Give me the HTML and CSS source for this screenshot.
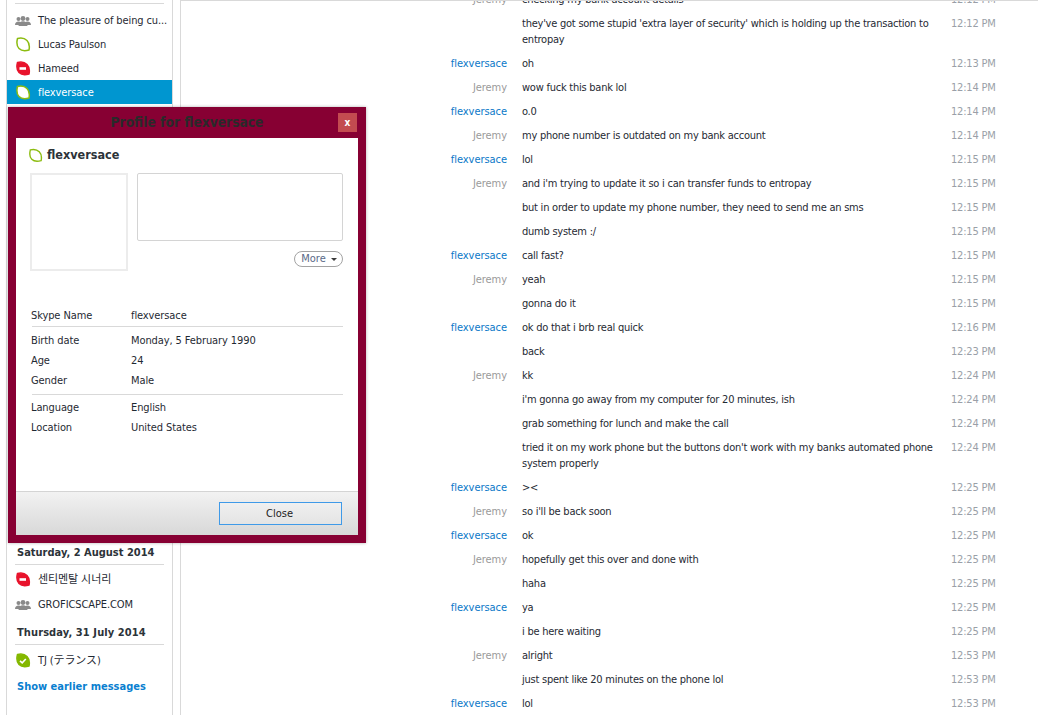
FILE: index.html
```html
<!DOCTYPE html>
<html lang="en">
<head>
<meta charset="utf-8">
<title>Skype</title>
<link rel="stylesheet" href="styles.css">
</head>
<body>
<svg class="defs" width="0" height="0" aria-hidden="true">
  <defs>
    <path id="blob" d="M2.500 1.500C6 .6 10 1.500 12 3.500 14 5.500 14.800 9 14 13 10.500 14 6 13.500 4 11.500 2 9.500 1.500 5.500 2.500 1.500Z"/>
    <g id="people" fill="#8a8a8a">
      <circle cx="3.500" cy="5" r="2"/><circle cx="12.500" cy="5" r="2"/><circle cx="8" cy="4.500" r="2.400"/>
      <path d="M0 11c0-2.400 1.400-3.600 3.500-3.600S7 8.600 7 11ZM9 11c0-2.400 1.400-3.600 3.500-3.600S16 8.600 16 11Z"/>
      <path d="M3.500 12c0-3 2-4.800 4.500-4.800s4.500 1.800 4.500 4.800Z"/>
    </g>
  </defs>
</svg>

<aside class="sidebar">
  <div class="side-top">
    <div class="side-rule"></div>
    <div class="contact"><svg class="ico ico-people" viewBox="0 0 16 12"><use href="#people"/></svg><span class="cname">The pleasure of being cu...</span></div>
    <div class="contact"><svg class="ico" viewBox="0 0 16 15"><use href="#blob" fill="#fff" stroke="#8cbc10" stroke-width="1.500"/></svg><span class="cname">Lucas Paulson</span></div>
    <div class="contact"><svg class="ico" viewBox="0 0 16 15"><use href="#blob" fill="#e8132c" stroke="#e8132c" stroke-width="1.500"/><rect x="4.500" y="6.200" width="6.500" height="2.600" fill="#fff"/></svg><span class="cname">Hameed</span></div>
    <div class="contact selected"><svg class="ico" viewBox="0 0 16 15"><use href="#blob" fill="#fff" stroke="#8cbc10" stroke-width="1.500"/></svg><span class="cname">flexversace</span></div>
  </div>
  <div class="side-bottom">
    <div class="day">Saturday, 2 August 2014</div>
    <div class="contact"><svg class="ico" viewBox="0 0 16 15"><use href="#blob" fill="#e8132c" stroke="#e8132c" stroke-width="1.500"/><rect x="4.500" y="6.200" width="6.500" height="2.600" fill="#fff"/></svg><span class="cname cjk">센티멘탈 시너리</span></div>
    <div class="contact"><svg class="ico ico-people" viewBox="0 0 16 12"><use href="#people"/></svg><span class="cname">GROFICSCAPE.COM</span></div>
    <div class="day day-next">Thursday, 31 July 2014</div>
    <div class="contact"><svg class="ico" viewBox="0 0 16 15"><use href="#blob" fill="#84b800" stroke="#84b800" stroke-width="1.500"/><path d="M5 7.800 7.200 9.800 10.800 6" fill="none" stroke="#fff" stroke-width="1.600"/></svg><span class="cname cjk">TJ (テランス)</span></div>
    <a class="earlier" href="#">Show earlier messages</a>
  </div>
</aside>

<main class="chat">
  <div class="log">
    <div class="row row-cut"><span class="who">Jeremy</span><span class="msg">checking my bank account details</span><span class="time">12:12 PM</span></div>
    <div class="row"><span class="who"></span><span class="msg">they've got some stupid 'extra layer of security' which is holding up the transaction to entropay</span><span class="time">12:12 PM</span></div>
    <div class="row"><span class="who me">flexversace</span><span class="msg">oh</span><span class="time">12:13 PM</span></div>
    <div class="row"><span class="who">Jeremy</span><span class="msg">wow fuck this bank lol</span><span class="time">12:14 PM</span></div>
    <div class="row"><span class="who me">flexversace</span><span class="msg">o.0</span><span class="time">12:14 PM</span></div>
    <div class="row"><span class="who">Jeremy</span><span class="msg">my phone number is outdated on my bank account</span><span class="time">12:14 PM</span></div>
    <div class="row"><span class="who me">flexversace</span><span class="msg">lol</span><span class="time">12:15 PM</span></div>
    <div class="row"><span class="who">Jeremy</span><span class="msg">and i'm trying to update it so i can transfer funds to entropay</span><span class="time">12:15 PM</span></div>
    <div class="row"><span class="who"></span><span class="msg">but in order to update my phone number, they need to send me an sms</span><span class="time">12:15 PM</span></div>
    <div class="row"><span class="who"></span><span class="msg">dumb system :/</span><span class="time">12:15 PM</span></div>
    <div class="row"><span class="who me">flexversace</span><span class="msg">call fast?</span><span class="time">12:15 PM</span></div>
    <div class="row"><span class="who">Jeremy</span><span class="msg">yeah</span><span class="time">12:15 PM</span></div>
    <div class="row"><span class="who"></span><span class="msg">gonna do it</span><span class="time">12:15 PM</span></div>
    <div class="row"><span class="who me">flexversace</span><span class="msg">ok do that i brb real quick</span><span class="time">12:16 PM</span></div>
    <div class="row"><span class="who"></span><span class="msg">back</span><span class="time">12:23 PM</span></div>
    <div class="row"><span class="who">Jeremy</span><span class="msg">kk</span><span class="time">12:24 PM</span></div>
    <div class="row"><span class="who"></span><span class="msg">i'm gonna go away from my computer for 20 minutes, ish</span><span class="time">12:24 PM</span></div>
    <div class="row"><span class="who"></span><span class="msg">grab something for lunch and make the call</span><span class="time">12:24 PM</span></div>
    <div class="row"><span class="who"></span><span class="msg">tried it on my work phone but the buttons don't work with my banks automated phone system properly</span><span class="time">12:24 PM</span></div>
    <div class="row"><span class="who me">flexversace</span><span class="msg">&gt;&lt;</span><span class="time">12:25 PM</span></div>
    <div class="row"><span class="who">Jeremy</span><span class="msg">so i'll be back soon</span><span class="time">12:25 PM</span></div>
    <div class="row"><span class="who me">flexversace</span><span class="msg">ok</span><span class="time">12:25 PM</span></div>
    <div class="row"><span class="who">Jeremy</span><span class="msg">hopefully get this over and done with</span><span class="time">12:25 PM</span></div>
    <div class="row"><span class="who"></span><span class="msg">haha</span><span class="time">12:25 PM</span></div>
    <div class="row"><span class="who me">flexversace</span><span class="msg">ya</span><span class="time">12:25 PM</span></div>
    <div class="row"><span class="who"></span><span class="msg">i be here waiting</span><span class="time">12:25 PM</span></div>
    <div class="row"><span class="who">Jeremy</span><span class="msg">alright</span><span class="time">12:53 PM</span></div>
    <div class="row"><span class="who"></span><span class="msg">just spent like 20 minutes on the phone lol</span><span class="time">12:53 PM</span></div>
    <div class="row"><span class="who me">flexversace</span><span class="msg">lol</span><span class="time">12:53 PM</span></div>
  </div>
</main>

<section class="dialog">
  <header class="dialog-title"><h1>Profile for flexversace</h1><button class="dialog-x">x</button></header>
  <div class="dialog-body">
    <div class="profile">
      <div class="profile-name"><svg class="ico-name" viewBox="0 0 16 15"><use href="#blob" fill="#fff" stroke="#8cbc10" stroke-width="1.500"/></svg>flexversace</div>
      <div class="profile-top">
        <div class="avatar"></div>
        <div class="mood-col">
          <div class="mood"></div>
          <button class="more">More<span class="caret"></span></button>
        </div>
      </div>
      <div class="facts facts-first">
        <div class="fact"><span class="fl">Skype Name</span><span>flexversace</span></div>
      </div>
      <div class="facts facts-mid">
        <div class="fact"><span class="fl">Birth date</span><span>Monday, 5 February 1990</span></div>
        <div class="fact"><span class="fl">Age</span><span>24</span></div>
        <div class="fact"><span class="fl">Gender</span><span>Male</span></div>
      </div>
      <div class="facts facts-last">
        <div class="fact"><span class="fl">Language</span><span>English</span></div>
        <div class="fact"><span class="fl">Location</span><span>United States</span></div>
      </div>
    </div>
    <footer class="dialog-foot"><button class="close">Close</button></footer>
  </div>
</section>
</body>
</html>
```
FILE: styles.css
```css
* { box-sizing: border-box; }
html, body { margin: 0; height: 100%; }
body {
  width: 1038px; height: 715px; overflow: hidden; background: #fff;
  display: flex; align-items: stretch; color: #1f2a33;
  font-family: "DejaVu Sans Condensed", "DejaVu Sans", "Noto Sans CJK KR", sans-serif;
  font-stretch: condensed; font-size: 11px; line-height: 16px;
}
button { font-family: inherit; font-stretch: inherit; }
.defs { position: absolute; }
.sidebar {
  width: 167px; margin-left: 6px; border-left: 1px solid #d9d9d9; border-right: 1px solid #d9d9d9;
  display: flex; flex-direction: column; justify-content: space-between; flex: none;
}
.side-rule { height: 1px; margin: 3px 8px 4px; background: #d9d9d9; }
.contact { height: 24px; display: flex; align-items: center; padding-left: 8px; white-space: nowrap; }
.cname { letter-spacing: -.1px; padding-top: 2px; }
.ico { width: 16px; height: 15px; flex: none; margin-right: 7px; }
.ico-people { height: 12px; }
.selected { background: #0096d0; color: #fff; }
.side-bottom { padding-bottom: 20px; }
.side-bottom .contact + .contact { margin-top: 1px; }
.day { font-weight: 700; margin: 0 8px 2px; padding: 0 2px 3px; height: 20px; border-bottom: 1px solid #d9d9d9; color: #2c3339; }
.day-next { margin-top: 9px; margin-bottom: 3px; letter-spacing: .1px; }
.earlier { display: block; margin: 7px 0 0 10px; font-weight: 700; color: #0a7fd0; text-decoration: none; }
.chat { margin-left: 7px; flex: 1; border-left: 1px solid #d9d9d9; border-top: 1px solid #d9d9d9; overflow: hidden; min-width: 0; }
.log { margin-top: -13px; }
.row { display: grid; grid-template-columns: 326px 441px 90px; padding: 4px 0; }
.who { text-align: right; color: #9a9a9a; letter-spacing: -.05px; }
.who.me { color: #0a78c8; }
.msg { padding-left: 15px; padding-right: 10px; letter-spacing: -.24px; }
.time { padding-left: 3px; color: #9a9fa8; letter-spacing: -.2px; }
.dialog {
  position: absolute; left: 8px; top: 107px; width: 358px; height: 436px;
  background: #870033; padding: 0 8px 8px; display: flex; flex-direction: column;
  box-shadow: 0 0 3px rgba(0,0,0,.3);
}
.dialog-title { height: 31px; display: flex; align-items: center; justify-content: center; position: relative; flex: none; padding-bottom: 1px; }
.dialog-title h1 { margin: 0; font-size: 13.7px; font-weight: 700; color: #2a2a2a; }
.dialog-x {
  position: absolute; right: 1px; top: 6px; width: 19px; height: 19px; border: 0; padding: 0;
  background: #c34b50; color: #fff; font-weight: 700; font-size: 10px; line-height: 19px;
}
.dialog-body { flex: 1; background: #fff; display: flex; flex-direction: column; min-height: 0; }
.profile { flex: 1; padding: 8px 15px 0 14px; }
.profile-name { display: flex; align-items: center; font-size: 12.5px; font-weight: 700; color: #2c3339; height: 18px; }
.ico-name { width: 15px; height: 15px; margin-left: -2px; margin-right: 4px; }
.profile-top { display: flex; gap: 9px; margin-top: 9px; height: 133px; }
.avatar { width: 98px; height: 98px; border: 2px solid #ececec; flex: none; }
.mood-col { flex: 1; display: flex; flex-direction: column; align-items: flex-end; }
.mood { width: 100%; height: 68px; border: 1px solid #d4d4d4; border-radius: 2px; }
.more {
  margin-top: 10px; height: 16px; width: 49px; border: 1px solid #a3a3a3; border-radius: 8px; background: #fff;
  color: #5a6a88; font-size: 11px; line-height: 14px; padding: 0 0 0 1px; display: flex; align-items: center; justify-content: center; gap: 5px;
}
.caret { width: 0; height: 0; border: 3px solid transparent; border-top-color: #3a3a3a; border-bottom: 0; }
.facts { border-bottom: 1px solid #d9d9d9; margin-left: 2px; letter-spacing: -.1px; }
.facts-first { padding: 0; }
.facts-mid { padding: 4px 0 3px; }
.facts-last { border-bottom: 0; padding: 3px 0; }
.fact { display: flex; height: 20px; align-items: center; }
.fl { width: 99px; flex: none; margin-left: -1px; margin-right: 1px; }
.dialog-foot {
  height: 44px; flex: none; border-top: 1px solid #d4d4d4; background: linear-gradient(#f2f2f2, #d8d8d8);
  display: flex; justify-content: flex-end; align-items: center; padding: 0 16px 0 0;
}
.close { width: 123px; height: 23px; border: 1px solid #3f9ae8; background: linear-gradient(#f0f0f0, #e4e4e4); color: #222; font-size: 11px; line-height: 16px; padding: 1px 2px 0 0; }
```
